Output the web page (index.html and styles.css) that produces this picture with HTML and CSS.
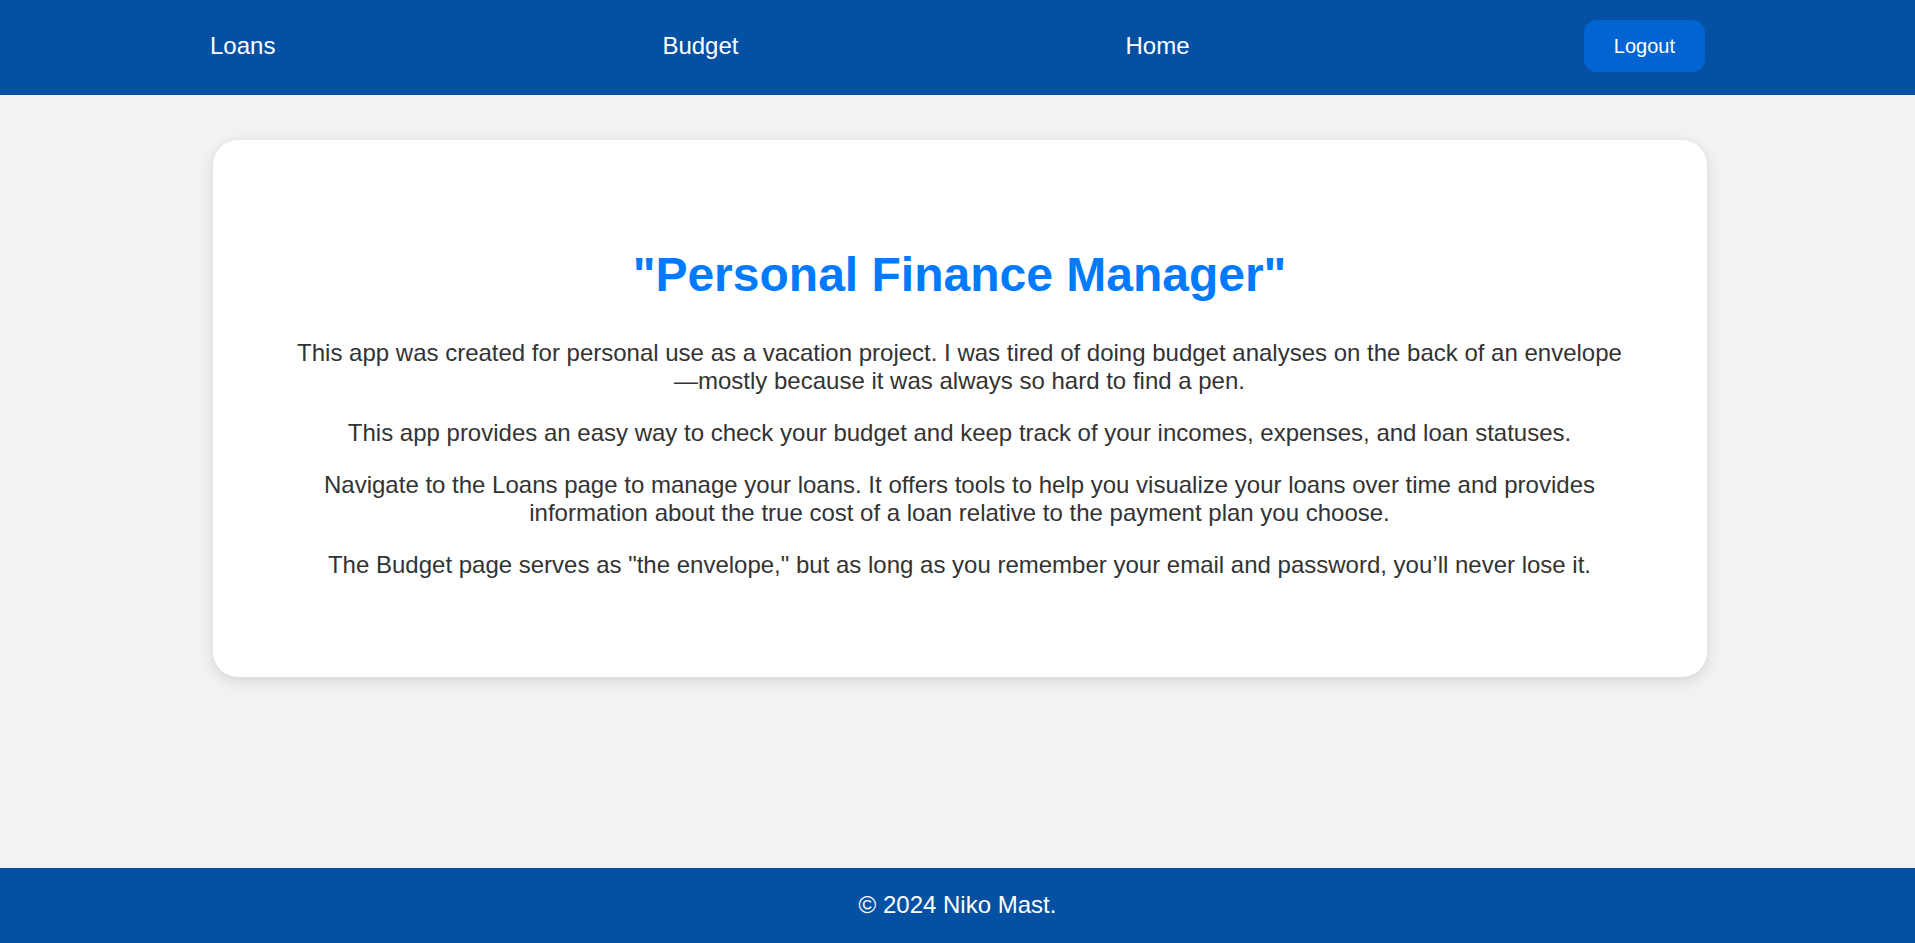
FILE: index.html
```html
<!DOCTYPE html>
<html lang="en">
<head>
<meta charset="utf-8">
<title>Personal Finance Manager</title>
<link rel="stylesheet" href="styles.css">
</head>
<body>
  <header class="topbar">
    <nav class="nav">
      <a class="nav-link" href="#">Loans</a>
      <a class="nav-link" href="#">Budget</a>
      <a class="nav-link" href="#">Home</a>
      <button class="logout" type="button">Logout</button>
    </nav>
  </header>
  <main class="main">
    <section class="card">
      <h1 class="title">"Personal Finance Manager"</h1>
      <p class="text">This app was created for personal use as a vacation project. I was tired of doing budget analyses on the back of an envelope —mostly because it was always so hard to find a pen.</p>
      <p class="text">This app provides an easy way to check your budget and keep track of your incomes, expenses, and loan statuses.</p>
      <p class="text">Navigate to the Loans page to manage your loans. It offers tools to help you visualize your loans over time and provides information about the true cost of a loan relative to the payment plan you choose.</p>
      <p class="text">The Budget page serves as "the envelope," but as long as you remember your email and password, you’ll never lose it.</p>
    </section>
  </main>
  <footer class="footer">© 2024 Niko Mast.</footer>
</body>
</html>
```

FILE: styles.css
```css
* {
  box-sizing: border-box;
}

html, body {
  margin: 0;
  padding: 0;
}

body {
  min-height: 100vh;
  display: flex;
  flex-direction: column;
  background: #f2f2f2;
  font-family: "Liberation Sans", Arial, sans-serif;
  color: #333333;
}

.topbar {
  background: #0451a3;
  height: 95px;
  padding: 0 0 3px;
  display: flex;
  align-items: center;
}

.nav {
  width: 1495px;
  margin: 0 auto;
  display: flex;
  align-items: center;
  gap: 387px;
}

.nav-link {
  color: #ffffff;
  text-decoration: none;
  font-size: 24px;
  line-height: 28px;
}

.logout {
  margin-left: auto;
  background: #0064d2;
  color: #ffffff;
  border: none;
  border-radius: 13px;
  font-family: "Liberation Sans", Arial, sans-serif;
  font-size: 20px;
  line-height: 23px;
  padding: 15px 30px 14px;
  cursor: pointer;
}

.main {
  flex: 1;
  padding: 45px 0 0 4px;
}

.card {
  width: 1494px;
  margin: 0 auto;
  background: #ffffff;
  border-radius: 25px;
  box-shadow: 0 4px 14px rgba(0, 0, 0, 0.12);
  padding: 107px 80px 98px;
  text-align: center;
}

.title {
  margin: 0 0 37px;
  font-size: 48px;
  font-weight: bold;
  color: #007bff;
  line-height: 55px;
}

.text {
  margin: 0 0 24px;
  font-size: 24px;
  line-height: 28px;
}

.text:last-child {
  margin-bottom: 0;
}

.footer {
  background: #0451a3;
  color: #ffffff;
  text-align: center;
  font-size: 24px;
  line-height: 28px;
  padding: 23px 0 24px;
}
```
